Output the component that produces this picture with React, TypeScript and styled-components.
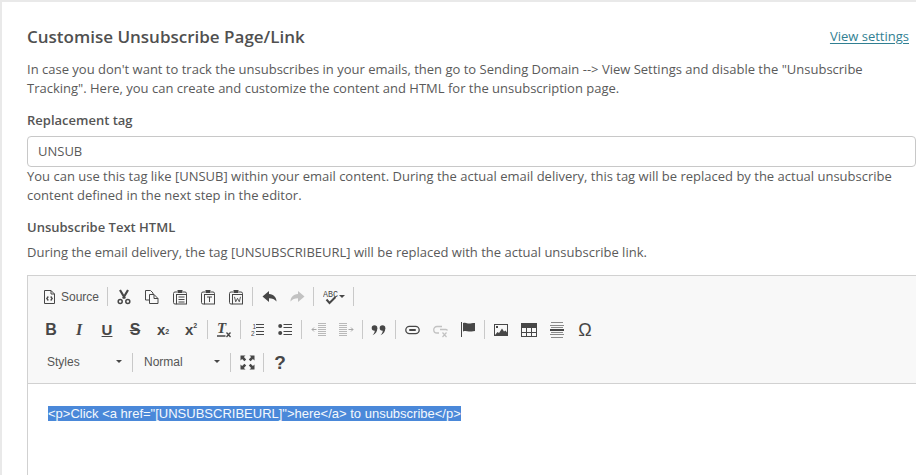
import React from "react";
import styled, { createGlobalStyle } from "styled-components";

const Global = createGlobalStyle`
  html, body { margin: 0; padding: 0; height: 475px; overflow: hidden; background: #e9e9e9; }
  * { box-sizing: border-box; }
`;

const Card = styled.main`
  margin: 2px 0 0 2px;
  height: 473px;
  overflow: hidden;
  background: #fff;
  padding: 25px 0 0 25px;
  font-family: "Open Sans", sans-serif;
  font-size: 13px;
  line-height: 19px;
  color: #5a5a5a;
`;
const Header = styled.header`
  display: flex;
  justify-content: space-between;
  align-items: flex-start;
  padding-right: 7px;
  margin-bottom: 13px;
`;
const Title = styled.h1`
  margin: 0;
  font-size: 17px;
  line-height: 20px;
  font-weight: 600;
  color: #505050;
`;
const SettingsLink = styled.a`
  font-size: 13px;
  line-height: 18px;
  color: #317f92;
  text-decoration: underline;
  text-underline-offset: 2px;
`;
const Text = styled.p<{ $after?: number }>`
  margin: 0 0 ${(p) => p.$after ?? 0}px;
`;
const Label = styled.label<{ $after?: number }>`
  display: block;
  font-weight: 600;
  line-height: 19px;
  color: #555;
  margin-bottom: ${(p) => p.$after ?? 0}px;
`;
const TagInput = styled.div`
  height: 31px;
  border: 1px solid #c8c8c8;
  border-radius: 4px;
  padding: 0 10px;
  line-height: 28px;
`;
const Editor = styled.section`
  border: 1px solid #d1d1d1;
  border-right: none;
  margin-top: 13px;
`;
const Toolbar = styled.div`
  background: #f8f8f8;
  border-bottom: 1px solid #d1d1d1;
  padding: 4px 0 5px 9px;
  height: 108px;
`;
const Row = styled.div`
  display: flex;
  align-items: center;
  height: 33px;
`;
const Sep = styled.span`
  width: 1px;
  height: 19px;
  background: #c9c9c9;
  margin: 0 2px;
`;
const Btn = styled.span<{ $w?: number; $off?: boolean }>`
  display: flex;
  align-items: center;
  justify-content: center;
  width: ${(p) => p.$w ?? 28}px;
  height: 24px;
  color: #474747;
  opacity: ${(p) => (p.$off ? 0.3 : 1)};
  svg { display: block; }
`;
const SourceBtn = styled.span`
  display: flex;
  align-items: center;
  gap: 6px;
  width: 68px;
  padding-left: 7px;
  color: #555;
  font: 12px "Liberation Sans", Arial, sans-serif;
`;
const Combo = styled.span<{ $left: number }>`
  display: flex;
  align-items: center;
  justify-content: space-between;
  width: 93px;
  padding: 0 8px 2px ${(p) => p.$left}px;
  color: #555;
  font: 12px "Liberation Sans", Arial, sans-serif;
`;
const Caret = styled.i`
  width: 0;
  height: 0;
  border: 3px solid transparent;
  border-top: 3px solid #474747;
  border-bottom: none;
`;
const Glyph = styled.span<{ $serif?: boolean; $italic?: boolean; $under?: boolean; $strike?: boolean; $size?: number; $thin?: boolean }>`
  font-family: ${(p) => (p.$serif ? '"Liberation Serif"' : '"Liberation Sans"')}, serif;
  font-weight: ${(p) => (p.$thin ? 400 : 700)};
  font-size: ${(p) => p.$size ?? 14}px;
  line-height: 18px;
  font-style: ${(p) => (p.$italic ? "italic" : "normal")};
  text-decoration: ${(p) => (p.$under ? "underline" : p.$strike ? "line-through" : "none")};
  color: #474747;
`;
const Script = styled.span<{ $up?: boolean }>`
  display: inline-block;
  font: 700 7px/8px "Liberation Sans", sans-serif;
  color: #474747;
  transform: translateY(${(p) => (p.$up ? -4 : 2)}px);
`;
const Content = styled.div`
  background: #fff;
  padding: 22px 0 0 20px;
  height: 120px;
  font: 13px/15px "Liberation Sans", Arial, sans-serif;
`;
const Selected = styled.span`
  background: #4a88d9;
  color: #f4f8fd;
`;

const INK = "#474747";

const Ic = ({ w = 16, h = 16, children }: { w?: number; h?: number; children: React.ReactNode }) => (
  <svg width={w} height={h} viewBox={`0 0 ${w} ${h}`} fill="none" stroke={INK} strokeWidth="1">
    {children}
  </svg>
);

const SourceIcon = () => (
  <Ic w={11}>
    <path d="M.5 1.500h6.500l3.500 3.500v9.500H.5zM7 1.500V5h3.500" />
    <path d="M4.300 7.500L2.800 9.500l1.500 2M6.700 7.500l1.500 2-1.500 2" strokeWidth="1.300" />
  </Ic>
);
const CutIcon = () => (
  <Ic w={14}>
    <path d="M3 1l5 8.500M11 1L6 9.500" strokeWidth="2.200" />
    <circle cx="3.200" cy="12.500" r="2" strokeWidth="1.500" />
    <circle cx="10.800" cy="12.500" r="2" strokeWidth="1.500" />
  </Ic>
);
const CopyIcon = () => (
  <Ic w={14}>
    <path d="M.5 1.500h5L8 4v2M.5 1.500v9.500h4" />
    <path d="M4.500 5.500H9l4 4v5H4.500zM9 5.500v4h4" />
  </Ic>
);
const PasteBase = ({ children }: { children?: React.ReactNode }) => (
  <Ic w={14}>
    <path d="M4 3H2a1.500 1.500 0 0 0-1.500 1.500v9A1.500 1.500 0 0 0 2 15h1.500M10 3h2a1.500 1.500 0 0 1 1.500 1.500V5" />
    <rect x="4.500" y="1" width="5" height="3" fill={INK} stroke="none" />
    <rect x="3.500" y="5.500" width="10" height="9.500" />
    {children}
  </Ic>
);
const PasteIcon = () => (
  <PasteBase>
    <path d="M5.500 8h6M5.500 10.500h6M5.500 13h6" />
  </PasteBase>
);
const PasteTextIcon = () => (
  <PasteBase>
    <path d="M6 8h5M8.500 8v5" />
  </PasteBase>
);
const PasteWordIcon = () => (
  <PasteBase>
    <path d="M5.500 7.800l1.200 5 1.800-3.500 1.800 3.500 1.200-5" strokeWidth="0.900" />
  </PasteBase>
);
const UndoIcon = ({ flip }: { flip?: boolean }) => (
  <svg width="15" height="15" viewBox="0 0 15 15" style={flip ? { transform: "scaleX(-1)" } : undefined}>
    <path d="M7 2L.5 7.500 7 13V9.300c3.300 0 5.500.7 7.500 3.200 0-4-2.500-7-7.500-7.500z" fill={INK} />
  </svg>
);
const SpellIcon = () => (
  <svg width="16" height="16" viewBox="0 0 16 16">
    <text x="0" y="7.500" fontFamily="Liberation Mono" fontSize="9" textLength="15" lengthAdjust="spacingAndGlyphs" fill={INK}>ABC</text>
    <path d="M3.500 10.500l3 3.500 6-6" stroke={INK} strokeWidth="2" fill="none" />
  </svg>
);
const ClearIcon = () => (
  <svg width="18" height="18" viewBox="0 0 18 18">
    <text x="2" y="12" fontFamily="Liberation Serif" fontStyle="italic" fontWeight="700" fontSize="15" fill={INK}>T</text>
    <path d="M2 15h8.500M11.500 11.500l4 4.500M15.500 11.500l-4 4.500" stroke={INK} strokeWidth="1.300" />
  </svg>
);
const ListOl = () => (
  <Ic w={13}>
    <text x="1.500" y="7" fontFamily="Liberation Sans" fontSize="6.500" fill={INK} stroke="none">1</text>
    <text x="0" y="14" fontFamily="Liberation Sans" fontSize="6.500" fill={INK} stroke="none">2</text>
    <path d="M5 2.500h8M5 5.500h8M5 9.500h8M5 12.500h8" />
  </Ic>
);
const ListUl = () => (
  <Ic w={14}>
    <circle cx="2.200" cy="4" r="2" fill={INK} stroke="none" />
    <circle cx="2.200" cy="11" r="2" fill={INK} stroke="none" />
    <path d="M5.500 2.500h8.500M5.500 5.500h8.500M5.500 9.500h8.500M5.500 12.500h8.500" />
  </Ic>
);
const Dent = ({ flip }: { flip?: boolean }) => (
  <svg width="15" height="16" viewBox="0 0 15 16" fill="none" stroke="#a8a8a8" style={flip ? { transform: "scaleX(-1)" } : undefined}>
    <path d="M7 1.500h8M7 3.500h8M7 5.500h8M7 7.500h8M7 9.500h8M7 11.500h8M7 13.500h8" strokeWidth="0.800" />
    <path d="M1 7.500h4.500M3 5.500l-2 2 2 2" />
  </svg>
);
const QuoteIcon = () => (
  <svg width="16" height="16" viewBox="0 0 16 16" fill={INK}>
    <circle cx="3.500" cy="6" r="2.800" />
    <path d="M6.300 6c0 3.500-1.500 6-4.800 7.200C3.200 11.500 3.800 10 3.800 8z" />
    <circle cx="11.500" cy="6" r="2.800" />
    <path d="M14.300 6c0 3.500-1.500 6-4.800 7.200 1.700-1.700 2.300-3.200 2.300-5.200z" />
  </svg>
);
const LinkIcon = () => (
  <Ic w={15}>
    <rect x=".8" y="4.300" width="13.400" height="7.400" rx="3.700" strokeWidth="1.300" />
    <rect x="4" y="7" width="7" height="2" rx="1" fill={INK} stroke="none" />
  </Ic>
);
const UnlinkIcon = () => (
  <Ic w={15}>
    <path d="M9 4.500H4a3 3 0 0 0 0 6.500h2M7 7.500h6a2 2 0 0 1 1.500 1" strokeWidth="1.300" />
    <path d="M9.500 10.500l4 4.500M13.500 10.500l-4 4.500" strokeWidth="1.200" />
  </Ic>
);
const FlagIcon = () => (
  <svg width="14" height="15" viewBox="0 0 14 15">
    <path d="M.5 0v15" stroke={INK} strokeWidth="1" />
    <path d="M2 1c3-1 4 .5 6 .5S11 1 14 1v8c-3 .5-4 .5-6 .5S5 8.500 2 9.500z" fill={INK} />
  </svg>
);
const ImageIcon = () => (
  <svg width="14" height="12" viewBox="0 0 14 12" fill="none">
    <rect x=".5" y=".5" width="13" height="11" stroke={INK} />
    <rect x="2" y="2" width="2" height="2" fill={INK} />
    <path d="M1 11l2.500-3 1.500 1 3-4.500 2 3 1.500-1 1.500 2V11z" fill={INK} />
  </svg>
);
const TableIcon = () => (
  <svg width="16" height="14" viewBox="0 0 16 14" fill="none">
    <rect x=".5" y=".5" width="15" height="13" stroke={INK} />
    <rect x="0" y="0" width="16" height="5" fill={INK} />
    <path d="M5.500 5v9M10.500 5v9M0 9.500h16" stroke={INK} />
  </svg>
);
const HrIcon = () => (
  <svg width="14" height="16" viewBox="0 0 14 16" fill="none" stroke="#8a8a8a">
    <path d="M1 .5h12M0 3.500h14M1 5.500h12M1 10.500h12M0 12.500h14M1 15.500h12" />
    <path d="M0 8h14" stroke={INK} strokeWidth="2" />
  </svg>
);
const MaxIcon = () => (
  <svg width="15" height="15" viewBox="0 0 15 15" fill={INK}>
    <path d="M.5.500h5L3.900 2.100 6.200 4.400 4.400 6.200 2.100 3.900.5 5.500zM14.500.500v5l-1.600-1.600-2.300 2.300-1.800-1.800 2.300-2.300L9.500.5zM.5 14.500v-5l1.600 1.600 2.300-2.300 1.800 1.800-2.300 2.300 1.600 1.600zM14.500 14.500h-5l1.600-1.600-2.300-2.300 1.800-1.800 2.300 2.300 1.600-1.600z" />
  </svg>
);

export default function App() {
  return (
    <>
      <Global />
      <Card>
        <Header>
          <Title>Customise Unsubscribe Page/Link</Title>
          <SettingsLink href="#">View settings</SettingsLink>
        </Header>
        <Text $after={13}>
          In case you don't want to track the unsubscribes in your emails, then go to Sending Domain --&gt; View Settings
          and disable the "Unsubscribe Tracking". Here, you can create and customize the content and HTML for the
          unsubscription page.
        </Text>
        <Label $after={6}>Replacement tag</Label>
        <TagInput>UNSUB</TagInput>
        <Text $after={13}>
          You can use this tag like [UNSUB] within your email content. During the actual email delivery, this tag will
          be replaced by the actual unsubscribe content defined in the next step in the editor.
        </Text>
        <Label $after={6}>Unsubscribe Text HTML</Label>
        <Text>During the email delivery, the tag [UNSUBSCRIBEURL] will be replaced with the actual unsubscribe link.</Text>
        <Editor>
          <Toolbar>
            <Row>
              <SourceBtn><SourceIcon />Source</SourceBtn>
              <Sep />
              <Btn><CutIcon /></Btn>
              <Btn><CopyIcon /></Btn>
              <Btn><PasteIcon /></Btn>
              <Btn><PasteTextIcon /></Btn>
              <Btn><PasteWordIcon /></Btn>
              <Sep />
              <Btn><UndoIcon /></Btn>
              <Btn $off><UndoIcon flip /></Btn>
              <Sep />
              <Btn $w={35}><SpellIcon /><Caret /></Btn>
              <Sep />
            </Row>
            <Row>
              <Btn><Glyph $size={16}>B</Glyph></Btn>
              <Btn><Glyph $serif $italic $size={16}>I</Glyph></Btn>
              <Btn><Glyph $under $size={15}>U</Glyph></Btn>
              <Btn><Glyph $strike $size={16}>S</Glyph></Btn>
              <Btn><Glyph $size={15}>x</Glyph><Script>2</Script></Btn>
              <Btn><Glyph $size={15}>x</Glyph><Script $up>2</Script></Btn>
              <Sep />
              <Btn><ClearIcon /></Btn>
              <Sep />
              <Btn><ListOl /></Btn>
              <Btn><ListUl /></Btn>
              <Sep />
              <Btn><Dent /></Btn>
              <Btn><Dent flip /></Btn>
              <Sep />
              <Btn><QuoteIcon /></Btn>
              <Sep />
              <Btn><LinkIcon /></Btn>
              <Btn $off><UnlinkIcon /></Btn>
              <Btn><FlagIcon /></Btn>
              <Sep />
              <Btn><ImageIcon /></Btn>
              <Btn><TableIcon /></Btn>
              <Btn><HrIcon /></Btn>
              <Btn><Glyph $thin $size={18}>Ω</Glyph></Btn>
            </Row>
            <Row>
              <Combo $left={10}>Styles<Caret /></Combo>
              <Sep />
              <Combo $left={9}>Normal<Caret /></Combo>
              <Sep />
              <Btn><MaxIcon /></Btn>
              <Sep />
              <Btn><Glyph $size={19}>?</Glyph></Btn>
            </Row>
          </Toolbar>
          <Content>
            <Selected>&lt;p&gt;Click &lt;a href="[UNSUBSCRIBEURL]"&gt;here&lt;/a&gt; to unsubscribe&lt;/p&gt;</Selected>
          </Content>
        </Editor>
      </Card>
    </>
  );
}
